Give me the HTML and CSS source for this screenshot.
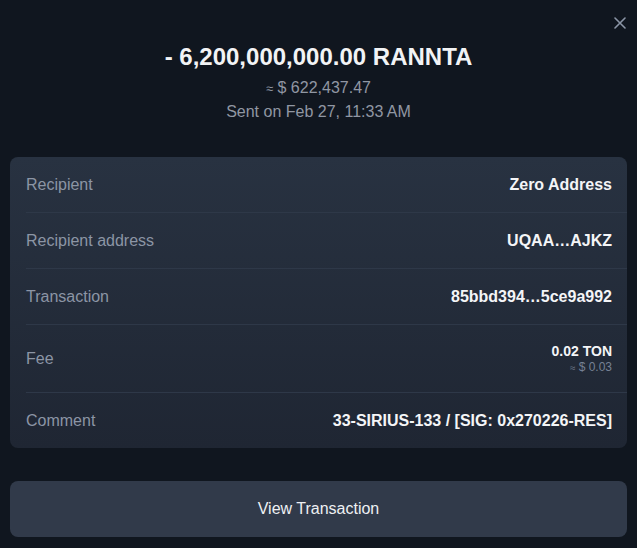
FILE: index.html
```html
<!DOCTYPE html>
<html lang="en">
<head>
<meta charset="utf-8">
<title>Transaction details</title>
<link rel="stylesheet" href="styles.css">
</head>
<body>
<div class="sheet">
  <button class="close" aria-label="Close">
    <svg width="12" height="12" viewBox="0 0 12 12"><path d="M1 1L11 11M11 1L1 11" stroke="currentColor" stroke-width="1.6" stroke-linecap="round"/></svg>
  </button>
  <header class="summary">
    <h1 class="amount">- 6,200,000,000.00 RANNTA</h1>
    <div class="fiat"><span class="approx">≈</span> $ 622,437.47</div>
    <div class="date">Sent on Feb 27, 11:33 AM</div>
  </header>
  <section class="details">
    <div class="row">
      <span class="label">Recipient</span>
      <span class="value">Zero Address</span>
    </div>
    <div class="row">
      <span class="label">Recipient address</span>
      <span class="value">UQAA…AJKZ</span>
    </div>
    <div class="row">
      <span class="label">Transaction</span>
      <span class="value">85bbd394…5ce9a992</span>
    </div>
    <div class="row row-fee">
      <span class="label">Fee</span>
      <span class="fee">
        <span class="fee-amount">0.02 TON</span>
        <span class="fee-fiat"><span class="approx">≈</span> $ 0.03</span>
      </span>
    </div>
    <div class="row">
      <span class="label">Comment</span>
      <span class="value">33-SIRIUS-133 / [SIG: 0x270226-RES]</span>
    </div>
  </section>
  <button class="action">View Transaction</button>
</div>
</body>
</html>
```

FILE: styles.css
```css
html, body {
  margin: 0;
  padding: 0;
  background: #10161f;
}

body {
  font-family: "Liberation Sans", Arial, sans-serif;
  color: #ffffff;
}

.sheet {
  position: relative;
  width: 637px;
  height: 548px;
  box-sizing: border-box;
  padding: 0 10px;
  display: flex;
  flex-direction: column;
}

.close {
  position: absolute;
  top: 17px;
  right: 11px;
  width: 12px;
  height: 12px;
  padding: 0;
  border: 0;
  background: none;
  color: #8b95a6;
  display: flex;
}

.summary {
  display: flex;
  flex-direction: column;
  align-items: center;
  padding-top: 43px;
}

.amount {
  margin: 0;
  font-size: 24px;
  line-height: 28px;
  font-weight: 700;
  color: #f2f3f5;
}

.fiat {
  height: 20px;
  margin-top: 7px;
  font-size: 16px;
  line-height: 20px;
  color: #9097a3;
}

.approx {
  font-size: 0.8em;
  line-height: 0;
}

.date {
  margin-top: 4px;
  font-size: 16px;
  line-height: 20px;
  color: #9097a3;
}

.details {
  margin-top: 35px;
  border-radius: 8px;
  background: linear-gradient(180deg, #283241 0%, #1f2633 100%);
  display: flex;
  flex-direction: column;
}

.row {
  height: 56px;
  margin-left: 16px;
  padding-right: 15px;
  display: flex;
  align-items: center;
  justify-content: space-between;
  border-bottom: 1px solid #2e3848;
  box-sizing: border-box;
}

.row:last-child {
  border-bottom: 0;
  height: 55px;
}

.row-fee {
  height: 68px;
}

.label {
  font-size: 16px;
  color: #8c95a5;
}

.value {
  font-size: 16px;
  font-weight: 700;
  color: #f4f5f7;
}

.fee {
  display: flex;
  flex-direction: column;
  align-items: flex-end;
}

.fee-amount {
  font-size: 14px;
  line-height: 17px;
  font-weight: 700;
  color: #f4f5f7;
}

.fee-fiat {
  height: 15px;
  font-size: 12px;
  line-height: 15px;
  color: #768194;
}

.action {
  margin-top: 33px;
  height: 56px;
  border: 0;
  border-radius: 8px;
  background: #313a4a;
  color: #eef0f3;
  font-family: "Liberation Sans", Arial, sans-serif;
  font-size: 16px;
}
```
